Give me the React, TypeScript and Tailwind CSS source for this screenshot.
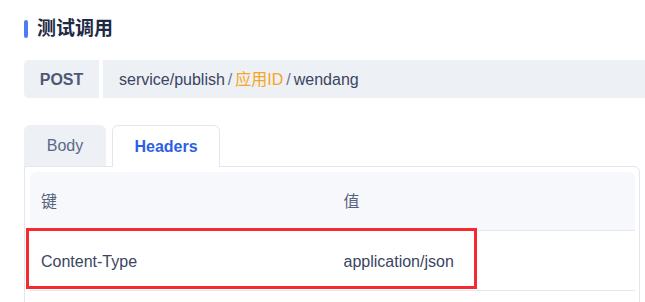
const FONT = "font-['Liberation_Sans','Noto_Sans_CJK_SC',sans-serif]"

const HEADERS = [{ key: 'Content-Type', value: 'application/json' }]

export default function App() {
  return (
    <div className={`${FONT} w-[645px] h-[302px] overflow-hidden bg-white pl-[24px] pt-[18px]`}>
      {/* 标题 */}
      <div className="flex items-center h-[22px]">
        <span className="w-[4px] h-[18px] rounded-full bg-[#4f7cf0]" />
        <h2 className="ml-[9px] text-[19px] leading-[22px] font-bold text-[#1e2a45]">测试调用</h2>
      </div>

      {/* 接口地址 */}
      <div className="mt-[20px] flex h-[38px] gap-[4px]">
        <div className="w-[75px] shrink-0 rounded-l-[5px] bg-[#edf0f5] flex items-center justify-center pt-px text-[16px] font-bold text-[#4d5873]">
          POST
        </div>
        <div className="flex-1 bg-[#edf0f5] flex items-center pl-[16px] pt-px text-[16px] text-[#3a4560]">
          <span>service/publish</span>
          <span className="mx-[3px] text-[#6b7590]">/</span>
          <span className="text-[#f5a623]">应用ID</span>
          <span className="mx-[3px] text-[#6b7590]">/</span>
          <span>wendang</span>
        </div>
      </div>

      {/* 标签 */}
      <div className="mt-[27px] w-[616px]">
        <div className="flex gap-[6px] h-[42px] relative z-10">
          <button className="w-[82px] h-[41px] rounded-t-[6px] bg-[#edf0f5] text-[16px] text-[#5c6884]">Body</button>
          <button className="w-[108px] h-[42px] rounded-t-[6px] bg-white border border-b-0 border-[#e3e6ec] text-[16px] font-bold text-[#2d5fe4]">
            Headers
          </button>
        </div>
        <div className="-mt-px border border-[#e3e6ec] rounded-tr-[6px] pl-[5px] pr-[4px] pt-[5px] h-[200px]">
          <div className="relative">
            <div className="grid grid-cols-2 h-[59px] items-center pt-[2px] rounded-t-[6px] bg-[#f7f8fc] border-b border-[#e5e8ee] text-[16px] text-[#56627c]">
              <span className="pl-[11px]">键</span>
              <span className="pl-[11px]">值</span>
            </div>
            {HEADERS.map(h => (
              <div key={h.key} className="grid grid-cols-2 h-[60px] items-center pt-[2px] border-b border-[#e5e8ee] text-[16px] text-[#3a4560]">
                <span className="pl-[11px]">{h.key}</span>
                <span className="pl-[11px]">{h.value}</span>
              </div>
            ))}
            {/* 标注框 */}
            <div className="absolute left-[-4px] top-[56px] w-[451px] h-[61px] border-[3px] border-[#f42a30]" />
          </div>
        </div>
      </div>
    </div>
  )
}
